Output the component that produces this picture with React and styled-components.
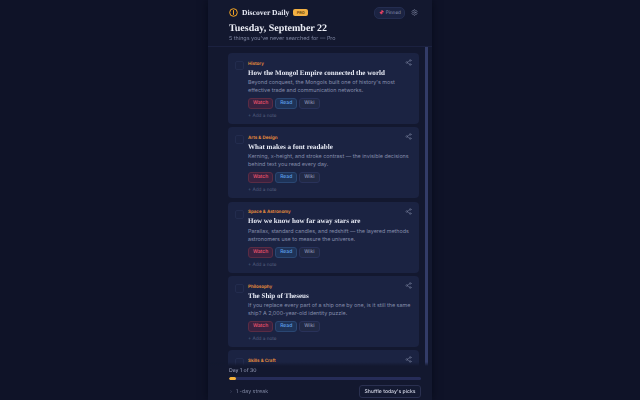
import React from "react";
import styled, { createGlobalStyle } from "styled-components";
import { Settings, Share2, Pin } from "lucide-react";

const GlobalStyle = createGlobalStyle`
  html, body {
    margin: 0;
    height: 100%;
    background: #0f1328;
  }
  body {
    font-family: "Inter", sans-serif;
    text-rendering: geometricPrecision;
    overflow: hidden;
  }
`;

const topics = [
  {
    category: "History",
    title: "How the Mongol Empire connected the world",
    text: "Beyond conquest, the Mongols built one of history's most effective trade and communication networks.",
  },
  {
    category: "Arts & Design",
    title: "What makes a font readable",
    text: "Kerning, x-height, and stroke contrast — the invisible decisions behind text you read every day.",
  },
  {
    category: "Space & Astronomy",
    title: "How we know how far away stars are",
    text: "Parallax, standard candles, and redshift — the layered methods astronomers use to measure the universe.",
  },
  {
    category: "Philosophy",
    title: "The Ship of Theseus",
    text: "If you replace every part of a ship one by one, is it still the same ship? A 2,000-year-old identity puzzle.",
  },
  {
    category: "Skills & Craft",
    title: "",
    text: "",
  },
];

const App = () => {
  return (
    <>
      <GlobalStyle />
      <Page>
        <Column>
          <Header>
            <TopRow>
              <Brand>
                <Logo>
                  <svg width="9" height="9" viewBox="0 0 9 9">
                    <circle cx="4.5" cy="4.5" r="3.8" fill="none" stroke="#f5a524" strokeWidth="1" />
                    <rect x="4" y="2.2" width="1" height="4.6" fill="#f5a524" />
                  </svg>
                </Logo>
                <BrandName>Discover Daily</BrandName>
                <ProBadge>PRO</ProBadge>
              </Brand>
              <Tools>
                <PinnedPill>
                  <PinIcon size={5} color="#f0476a" fill="#f0476a" />
                  Pinned
                </PinnedPill>
                <Settings size={7} color="#7d84a0" />
              </Tools>
            </TopRow>
            <DateTitle>Tuesday, September 22</DateTitle>
            <Sub>5 things you've never searched for — Pro</Sub>
          </Header>
          <Body>
            <List>
              {topics.map((t) => (
                <Card key={t.category}>
                  <Check />
                  <CardMain>
                    <Category>{t.category}</Category>
                    {t.title && <CardTitle>{t.title}</CardTitle>}
                    {t.text && <Desc>{t.text}</Desc>}
                    {t.title && (
                      <Buttons>
                        <Action $kind="watch">Watch</Action>
                        <Action $kind="read">Read</Action>
                        <Action $kind="wiki">Wiki</Action>
                      </Buttons>
                    )}
                    {t.title && <AddNote>+ Add a note</AddNote>}
                  </CardMain>
                  <ShareIcon>
                    <Share2 size={7} color="#6d7592" />
                  </ShareIcon>
                </Card>
              ))}
            </List>
            <Scrollbar />
          </Body>
          <Footer>
            <DayLabel>Day 1 of 30</DayLabel>
            <Track>
              <Fill style={{ width: `${(1 / 30) * 100 + 0.4}%` }} />
            </Track>
            <FooterRow>
              <Streak>
                <Dot>›</Dot>
                <span>1 -day streak</span>
              </Streak>
              <Shuffle>Shuffle today's picks</Shuffle>
            </FooterRow>
          </Footer>
        </Column>
      </Page>
    </>
  );
};

const Page = styled.div`
  height: 400px;
  display: flex;
  justify-content: center;
`;

const Column = styled.div`
  position: relative;
  width: 224px;
  height: 400px;
  background: #13182f;
  box-shadow: 0 0 8px rgba(4, 6, 16, 0.6);
  display: flex;
  flex-direction: column;
  overflow: hidden;
  filter: blur(0.4px);
`;

const Header = styled.div`
  height: 47px;
  padding: 7px 14.5px 0 21px;
  box-sizing: border-box;
  border-bottom: 1px solid #1b2140;
  flex-shrink: 0;
`;

const TopRow = styled.div`
  display: flex;
  justify-content: space-between;
  align-items: center;
  height: 11px;
`;

const Brand = styled.div`
  display: flex;
  align-items: center;
`;

const Logo = styled.div`
  width: 9px;
  height: 9px;
  display: flex;
  margin-right: 4px;
`;

const BrandName = styled.div`
  font-family: "Liberation Serif", serif;
  font-weight: 700;
  font-size: 7.6px;
  color: #e6e9f4;
  will-change: opacity;
`;

const ProBadge = styled.div`
  margin-left: 4px;
  background: #f2b043;
  color: #6b430a;
  font-size: 3.8px;
  font-weight: 700;
  padding: 1.5px 3.5px;
  border-radius: 2px;
  line-height: 3.8px;
`;

const Tools = styled.div`
  display: flex;
  align-items: center;
  gap: 5.5px;
`;

const PinnedPill = styled.div`
  display: flex;
  align-items: center;
  gap: 1.5px;
  height: 10px;
  padding: 0 3px 0 4px;
  border-radius: 5px;
  background: #1b2342;
  border: 1px solid #242d50;
  color: #8a92b4;
  font-size: 4.7px;
`;

const PinIcon = styled(Pin)`
  transform: rotate(40deg);
`;

const DateTitle = styled.div`
  margin-top: 5px;
  font-family: "Liberation Serif", serif;
  font-weight: 700;
  font-size: 10px;
  line-height: 12px;
  color: #eceef6;
  will-change: opacity;
`;

const Sub = styled.div`
  font-size: 5.45px;
  line-height: 8px;
  color: #7d84a0;
`;

const Body = styled.div`
  flex: 1;
  display: flex;
  min-height: 0;
  padding-left: 20px;
`;

const List = styled.div`
  width: 191px;
  padding-top: 6px;
  display: flex;
  flex-direction: column;
  gap: 3.3px;
`;

const Scrollbar = styled.div`
  width: 3px;
  margin-left: 6px;
  background: #333c68;
`;

const Card = styled.div`
  position: relative;
  flex-shrink: 0;
  height: 71px;
  box-sizing: border-box;
  padding: 8.7px 6px 0 7px;
  background: #1b2342;
  border-radius: 4px;
  display: flex;
`;

const Check = styled.div`
  width: 7px;
  height: 7px;
  margin-top: -0.7px;
  border: 1px solid #232c4e;
  border-radius: 2px;
  flex-shrink: 0;
`;

const CardMain = styled.div`
  flex: 1;
  margin-left: 4px;
  min-width: 0;
`;

const Category = styled.div`
  font-size: 4.5px;
  font-weight: 600;
  line-height: 6px;
  color: #f0923c;
`;

const CardTitle = styled.div`
  font-family: "Liberation Serif", serif;
  font-weight: 700;
  font-size: 7.05px;
  line-height: 10px;
  color: #e6e9f4;
  will-change: opacity;
`;

const Desc = styled.div`
  font-size: 5.4px;
  line-height: 8px;
  color: #868eac;
  margin-top: 1.3px;
`;

const kinds = {
  watch: { bg: "#3a2240", border: "#5a2c44", color: "#f0566e" },
  read: { bg: "#1e3358", border: "#2a4672", color: "#5ea2ee" },
  wiki: { bg: "#212945", border: "#29325a", color: "#8a92b4" },
};

const Buttons = styled.div`
  display: flex;
  gap: 2px;
  margin-top: 3px;
`;

const Action = styled.div`
  height: 11px;
  box-sizing: border-box;
  padding: 0 4px;
  border-radius: 3px;
  font-size: 5px;
  font-weight: 500;
  line-height: 9px;
  background: ${(p) => kinds[p.$kind].bg};
  border: 1px solid ${(p) => kinds[p.$kind].border};
  color: ${(p) => kinds[p.$kind].color};
`;

const AddNote = styled.div`
  margin-top: 4px;
  font-size: 4.7px;
  line-height: 6px;
  color: #586080;
`;

const ShareIcon = styled.div`
  position: absolute;
  top: 6px;
  right: 7px;
  display: flex;
`;

const Footer = styled.div`
  position: absolute;
  left: 0;
  right: 0;
  bottom: 0;
  height: 38px;
  box-sizing: border-box;
  padding: 6px 11px 0 21px;
  background: linear-gradient(rgba(19, 24, 47, 0), #13182f 4px);
`;

const DayLabel = styled.div`
  font-size: 5.2px;
  line-height: 7px;
  color: #9aa0bc;
`;

const Track = styled.div`
  margin-top: 2px;
  height: 3px;
  background: #262c58;
  border-radius: 1.5px;
  overflow: hidden;
`;

const Fill = styled.div`
  height: 100%;
  background: #f5b23c;
  border-radius: 1.5px;
`;

const FooterRow = styled.div`
  margin-top: 5px;
  display: flex;
  justify-content: space-between;
  align-items: center;
`;

const Streak = styled.div`
  display: flex;
  align-items: center;
  gap: 4px;
  font-size: 5.3px;
  color: #7d84a0;
`;

const Dot = styled.span`
  font-size: 5px;
  color: #4a5270;
  margin-left: 1px;
`;

const Shuffle = styled.div`
  height: 13px;
  width: 62px;
  box-sizing: border-box;
  border: 1px solid #2a3050;
  border-radius: 3px;
  background: #141a32;
  color: #d5d8e8;
  font-size: 5.1px;
  font-weight: 500;
  display: flex;
  align-items: center;
  justify-content: center;
`;

export default App;
